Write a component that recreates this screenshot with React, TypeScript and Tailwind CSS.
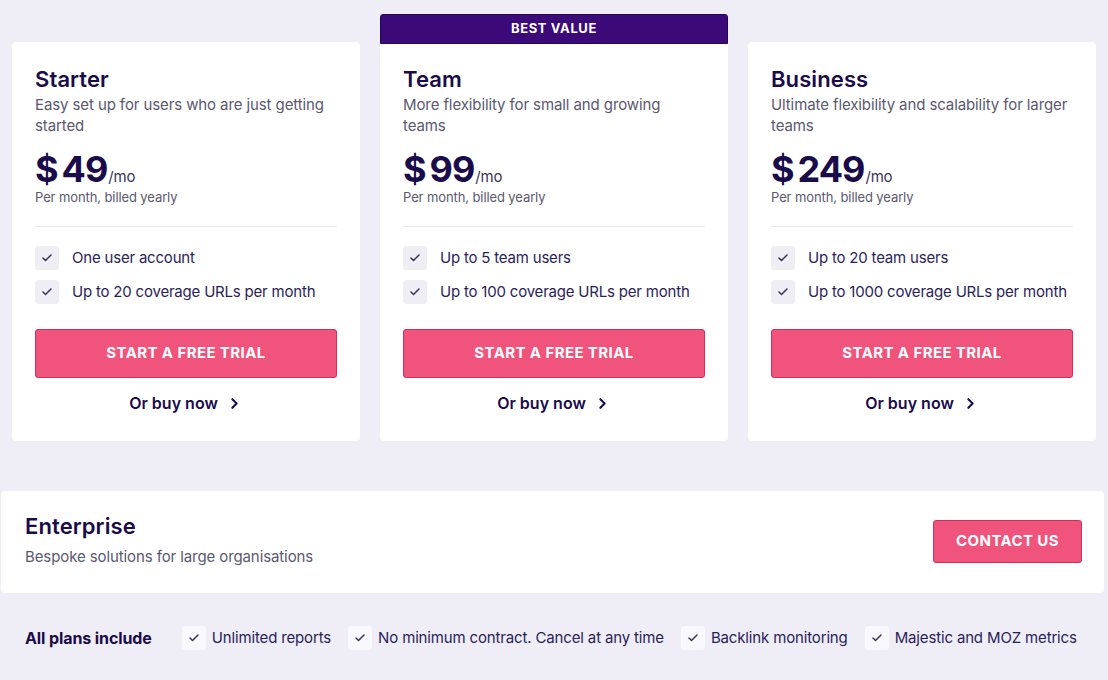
import React from "react";
import { Check, ChevronRight } from "lucide-react";

const FONT = { fontFamily: "Inter, 'Noto Sans', 'Liberation Sans', sans-serif" };

type Plan = {
  name: string;
  desc: string;
  price: string;
  features: string[];
  best?: boolean;
};

const plans: Plan[] = [
  {
    name: "Starter",
    desc: "Easy set up for users who are just getting started",
    price: "49",
    features: ["One user account", "Up to 20 coverage URLs per month"],
  },
  {
    name: "Team",
    desc: "More flexibility for small and growing teams",
    price: "99",
    features: ["Up to 5 team users", "Up to 100 coverage URLs per month"],
    best: true,
  },
  {
    name: "Business",
    desc: "Ultimate flexibility and scalability for larger teams",
    price: "249",
    features: ["Up to 20 team users", "Up to 1000 coverage URLs per month"],
  },
];

function CheckBox({ light }: { light?: boolean }) {
  return (
    <span
      className={`flex h-[24px] w-[24px] shrink-0 items-center justify-center rounded-[3px] ${
        light ? "bg-[#f9f8fc]" : "bg-[#f0eef5]"
      }`}
    >
      <Check size={12} strokeWidth={3} className="text-[#3a325e]" />
    </span>
  );
}

function PlanBody({ plan }: { plan: Plan }) {
  return (
    <div
      className={`flex flex-col bg-white px-[23px] pb-[26px] ${
        plan.best ? "rounded-b-[4px] pt-[21px]" : "rounded-[4px] pt-[23px]"
      }`}
    >
      <h2 className="text-[22px] font-semibold leading-[28px] tracking-[0.1px] text-[#1a0b4b]">
        {plan.name}
      </h2>
      <p className="mt-[1px] max-w-[299px] text-[15px] leading-[21px] tracking-[-0.1px] text-[#5b5870]">
        {plan.desc}
      </p>
      <div className="mt-[14px] flex h-[38px] items-baseline text-[#1a0b4b]">
        <span className="text-[36px] font-bold leading-[38px] tracking-[-1px]">
          <span className="mr-[4px]">$</span>
          {plan.price}
        </span>
        <span className="ml-[1px] text-[15px] leading-[15px] tracking-[-0.2px] text-[#3b3557]">/mo</span>
      </div>
      <p className="text-[13px] leading-[18px] tracking-[-0.1px] text-[#5b5870]">
        Per month, billed yearly
      </p>
      <div className="mt-[20px] h-px bg-[#ecebf1]" />
      <ul className="mt-[19px] flex flex-col gap-[10px]">
        {plan.features.map((f) => (
          <li key={f} className="flex items-center gap-[13px]">
            <CheckBox />
            <span className="whitespace-nowrap text-[15px] leading-[24px] tracking-[-0.2px] text-[#2a1e5a]">
              {f}
            </span>
          </li>
        ))}
      </ul>
      <button className="mt-[25px] h-[49px] w-full rounded-[3px] border border-[#cf2f5a] bg-[#f0547c] text-[15px] font-bold tracking-[0.4px] text-white">
        START A FREE TRIAL
      </button>
      <a className="mt-[13px] flex items-center justify-center gap-[8px] text-[16px] font-semibold leading-[24px] text-[#1a0b4b]">
        Or buy now
        <ChevronRight size={17} strokeWidth={3} />
      </a>
    </div>
  );
}

export default function App() {
  const extras = [
    "Unlimited reports",
    "No minimum contract. Cancel at any time",
    "Backlink monitoring",
    "Majestic and MOZ metrics",
  ];
  return (
    <div style={FONT} className="min-h-[680px] w-[1108px] bg-[#efedf5] pt-[14px]">
      <div className="flex items-end gap-[20px] pl-[12px]">
        {plans.map((p) =>
          p.best ? (
            <div key={p.name} className="flex w-[348px] flex-col">
              <div className="flex h-[30px] items-center justify-center rounded-t-[3px] border border-[#25055a] bg-[#3c0a78] text-[13px] font-bold tracking-[0.6px] text-white">
                BEST VALUE
              </div>
              <PlanBody plan={p} />
            </div>
          ) : (
            <div key={p.name} className="w-[348px]">
              <PlanBody plan={p} />
            </div>
          )
        )}
      </div>

      <div className="ml-[1px] mt-[50px] flex h-[102px] w-[1103px] items-center justify-between rounded-[4px] bg-white pl-[24px] pr-[22px]">
        <div className="flex flex-col pb-[6px]">
          <h2 className="text-[22px] font-semibold leading-[28px] tracking-[0.1px] text-[#1a0b4b]">
            Enterprise
          </h2>
          <p className="mt-[6px] text-[15px] leading-[21px] tracking-[-0.1px] text-[#5b5870]">
            Bespoke solutions for large organisations
          </p>
        </div>
        <button className="mb-[1px] h-[43px] w-[149px] rounded-[3px] border border-[#cf2f5a] bg-[#f0547c] text-[15px] font-bold tracking-[0.4px] text-white">
          CONTACT US
        </button>
      </div>

      <div className="mt-[33px] flex items-center pl-[25px]">
        <span className="mr-[30px] text-[16px] font-bold tracking-[-0.1px] text-[#1a0b4b]">
          All plans include
        </span>
        <div className="flex items-center gap-[17px]">
          {extras.map((e) => (
            <div key={e} className="flex items-center gap-[6px]">
              <CheckBox light />
              <span className="whitespace-nowrap text-[15px] leading-[24px] tracking-[-0.15px] text-[#2a1e5a]">
                {e}
              </span>
            </div>
          ))}
        </div>
      </div>
    </div>
  );
}
